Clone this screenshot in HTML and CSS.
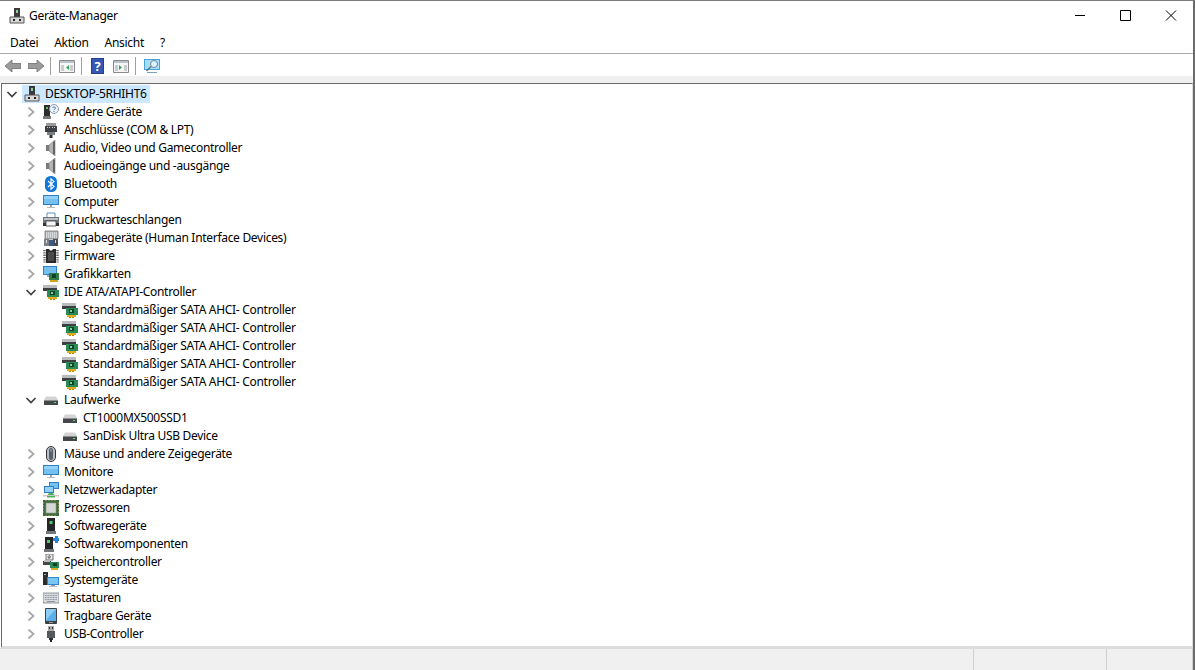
FILE: index.html
```html
<!DOCTYPE html>
<html lang="de">

<head>
    <meta charset="utf-8" />
    <title>Geräte-Manager</title>
    <link rel="stylesheet" href="styles.css">
</head>

<body>
    <!-- Icon sheet, every row below pulls its picture from here -->
    <svg class="icon-sheet" xmlns="http://www.w3.org/2000/svg">
        <symbol id="i-chevron-right" viewBox="0 0 16 16"><path d="M5.500 3.500 10.500 8l-5 4.500" fill="none" stroke="#a6a6a6" stroke-width="1.700"/></symbol>
        <symbol id="i-chevron-down" viewBox="0 0 16 16"><path d="M3.500 6 8 10.500 12.500 6" fill="none" stroke="#404040" stroke-width="1.700"/></symbol>
        <symbol id="i-host" viewBox="0 0 16 16"><path d="M5 0h6v9H5z" fill="#3a3a3a"/><path d="M7 2h2v3H7z" fill="#8fd0a0"/><path d="M1 9h14v6H1z" fill="#d8d8d8" stroke="#555"/><path d="M4 11h2v2H4zM10 11h2v2h-2z" fill="#222"/></symbol>
        <symbol id="i-other" viewBox="0 0 16 16"><path d="M1 1h6v11H1z" fill="#2d2d2d"/><path d="M3 3h2v2H3z" fill="#5fc26b"/><path d="M0 12h8v3H0z" fill="#777"/><circle cx="11" cy="5" r="4.500" fill="#eef5fc" stroke="#8a9bb0"/><path d="M9.500 3.800c.5-1.200 3-1.200 3 .3 0 1-1.500 1-1.500 2M11 7v1" fill="none" stroke="#44709c"/></symbol>
        <symbol id="i-port" viewBox="0 0 16 16"><path d="M3 1h10v3H3z" fill="#9a9a9a"/><path d="M2 4h12v6H2z" fill="#3e4246"/><path d="M4 5h1v1H4zM6 5h1v1H6zM9 5h1v1H9zM11 5h1v1h-1z" fill="#ccc"/><path d="M4 10h8v3H4z" fill="#7b7f84"/><path d="M6.500 13h3v3h-3z" fill="#2e2e2e"/></symbol>
        <symbol id="i-speaker" viewBox="0 0 16 16"><path d="M3 5h3v6H3z" fill="#7a7a7a"/><path d="M6 5l6-5v16l-6-5z" fill="#b4b4b4" stroke="#808080" stroke-width=".6"/><path d="M10 1.500h2v13h-2z" fill="#646464"/></symbol>
        <symbol id="i-bluetooth" viewBox="0 0 16 16"><rect x="2" y="0" width="12" height="16" rx="5.500" fill="#1076d8"/><path d="M5 5l6 5.500-3 2.800V2.700l3 2.800L5 11" fill="none" stroke="#fff" stroke-width="1.100"/></symbol>
        <symbol id="i-monitor" viewBox="0 0 16 16"><path d="M0 1h16v10H0z" fill="#2f80c4"/><path d="M1 2h14v8H1z" fill="#74c0f0"/><path d="M1 2h14v3H1z" fill="#93d2f6"/><path d="M7 11h2v2H7z" fill="#a8a8a8"/><path d="M4 13h8v1H4z" fill="#bbb"/></symbol>
        <symbol id="i-printer" viewBox="0 0 16 16"><path d="M4 1h8v5H4z" fill="#fff" stroke="#4a86b8" stroke-width=".9"/><path d="M0 5h16v6H0z" fill="#6f7479"/><path d="M1 6h14v2H1z" fill="#bcc2c7"/><path d="M3 9h10v5H3z" fill="#f4f4f4" stroke="#444" stroke-width=".8"/><path d="M0 11h3v3H0zM13 11h3v3h-3z" fill="#333"/></symbol>
        <symbol id="i-input" viewBox="0 0 16 16"><path d="M2 1h13v8H2z" fill="#b4b9be" stroke="#666" stroke-width=".7"/><path d="M3 3h11M3 5h11M3 7h11" stroke="#f2f2f2" stroke-dasharray="1 1"/><path d="M1 9h5v7H1z" fill="#7a8087"/><path d="M6 10h4v6H6z" fill="#3c5a85"/><path d="M10 9h5v7h-5z" fill="#4a4e54"/><path d="M3 10h1v3H3zM12 10h1v3h-1z" fill="#ddd"/></symbol>
        <symbol id="i-chip" viewBox="0 0 16 16"><path d="M3 1h3l1 1.500h2L10 1h3v14H3z" fill="#2a2a2a"/><path d="M5 4h6v9H5z" fill="#4a4a4a"/><path d="M1.500 2v12.500M14.500 2v12.500" stroke="#6a6a6a" stroke-width="2.500" stroke-dasharray="1.300 1"/></symbol>
        <symbol id="i-gpu" viewBox="0 0 16 16"><path d="M0 0h14v9H0z" fill="#2f80c4"/><path d="M1 1h12v7H1z" fill="#74c0f0"/><path d="M4 9h3v2H4z" fill="#aaa"/><path d="M6 7h10v7H6z" fill="#2f7d4f"/><path d="M9 8h4v4H9z" fill="#173f28"/><path d="M7 14h8v2H7z" fill="#d9a521"/></symbol>
        <symbol id="i-ide" viewBox="0 0 16 16"><path d="M0 1h14v5H0z" fill="#b9bcbf"/><path d="M0 4h14v3H0z" fill="#3c3f42"/><path d="M4 6h12v7H4z" fill="#2c8a56"/><path d="M7 7h5v4H7z" fill="#12432a"/><path d="M8 8h2v2H8z" fill="#7fd3a0"/><path d="M5 13h9v2H5z" fill="#e0ab1d"/><path d="M7 15h2v1H7zM10 15h2v1h-2z" fill="#b68208"/></symbol>
        <symbol id="i-drive" viewBox="0 0 16 16"><path d="M1 8 3 4.500h10L15 8z" fill="#d4d4d4"/><path d="M1 8h14v5H1z" fill="#44474a"/><path d="M1 8h14v1H1z" fill="#8a8d90"/><path d="M11 10h2v1h-2z" fill="#5fe06f"/></symbol>
        <symbol id="i-mouse" viewBox="0 0 16 16"><rect x="3.500" y=".5" width="9" height="15" rx="4.500" fill="#b9c0c8" stroke="#33363a"/><rect x="6" y="2" width="4" height="12" rx="2" fill="#5c6066"/><path d="M7.500 3h1v3h-1z" fill="#8fa8c4"/></symbol>
        <symbol id="i-network" viewBox="0 0 16 16"><path d="M6 0h10v7H6z" fill="#2f80c4"/><path d="M7 1h8v5H7z" fill="#74c0f0"/><path d="M1 4h10v7H1z" fill="#2f80c4"/><path d="M2 5h8v5H2z" fill="#93d2f6"/><path d="M0 13h16v1.500H0z" fill="#c8c8c8"/><path d="M6 11h4l1.500 2h-7z" fill="#4fb356"/><path d="M4 14h8v1.500H4z" fill="#4fb356"/></symbol>
        <symbol id="i-cpu" viewBox="0 0 16 16"><path d="M0 0h16v16H0z" fill="#2d6a43"/><path d="M1 1h14v14H1z" fill="#426b3f"/><path d="M3 3h10v10H3z" fill="#d5d8d5" stroke="#8d938d" stroke-width=".6"/><path d="M0 3h1M0 6h1M0 9h1M0 12h1M15 3h1M15 6h1M15 9h1M15 12h1M3 0v1M6 0v1M9 0v1M12 0v1M3 15v1M6 15v1M9 15v1M12 15v1" stroke="#d9b13a"/></symbol>
        <symbol id="i-softdev" viewBox="0 0 16 16"><path d="M4 0h8v13H4z" fill="#232527"/><path d="M6.500 3h3v3h-3z" fill="#54c56a"/><path d="M3 13h10v3H3z" fill="#73777b"/></symbol>
        <symbol id="i-softcomp" viewBox="0 0 16 16"><path d="M2 1h8v12H2z" fill="#232527"/><path d="M4 4h3v3H4z" fill="#54c56a"/><path d="M1 13h10v3H1z" fill="#73777b"/><path d="M10 2h2V0h3v2h1v3h-1v2h-3V5h-2z" fill="#2a86d6"/></symbol>
        <symbol id="i-storage" viewBox="0 0 16 16"><path d="M3 0h7v6H3z" fill="#e8e8e8" stroke="#555" stroke-width=".8"/><path d="M5 2.500c1-1.500 3-.5 2 1s-2 .5-1.500-.5" fill="none" stroke="#444"/><path d="M0 7h8v4H0z" fill="#45484b"/><path d="M1 6h6v2H1z" fill="#b9bcbf"/><path d="M7 8h9v6H7z" fill="#2c8a56"/><path d="M10 9h4v3h-4z" fill="#12432a"/><path d="M8 14h7v2H8z" fill="#e0ab1d"/></symbol>
        <symbol id="i-system" viewBox="0 0 16 16"><path d="M0 0h5v13H0z" fill="#2b2d2f"/><path d="M1 2h2v1H1z" fill="#7ed08d"/><path d="M4 5h12v8H4z" fill="#2d86cf"/><path d="M5 6h10v6H5z" fill="#7cc8f3"/><path d="M8 13h4v1H8z" fill="#999"/><path d="M6 14h8v1H6z" fill="#bbb"/></symbol>
        <symbol id="i-keyboard" viewBox="0 0 16 16"><path d="M0 3h16v10H0z" fill="#d7dbdf" stroke="#7c8086" stroke-width=".8"/><path d="M2 5.500h12M2 7.500h12M2 9.500h12" stroke="#8c929a" stroke-dasharray="1 .6"/><path d="M4 11.500h8" stroke="#8c929a"/></symbol>
        <symbol id="i-portable" viewBox="0 0 16 16"><rect x="2" y="0" width="12" height="16" rx="1" fill="#3d4045"/><path d="M3 1h10v12H3z" fill="#5aaeea"/><path d="M3 1h10L3 12z" fill="#8ccdf5"/><path d="M6 14h4v1H6z" fill="#999"/></symbol>
        <symbol id="i-usb" viewBox="0 0 16 16"><path d="M5 0h6v5H5z" fill="#a9a9a9"/><path d="M6 1h1v2H6zM9 1h1v2H9z" fill="#333"/><path d="M4 5h8v7H4z" fill="#55585c"/><path d="M6 12h4v2H6z" fill="#2f3133"/><path d="M7 14h2v2H7z" fill="#1e1e1e"/></symbol>
    </svg>

    <div class="window">
        <header class="title-bar">
            <svg class="ico"><use href="#i-host"/></svg>
            <span class="title-text">Geräte-Manager</span>
            <div class="win-controls">
                <svg class="win-btn" viewBox="0 0 12 12"><path d="M0 5.500h10" stroke="#000" fill="none"/></svg>
                <svg class="win-btn" viewBox="0 0 12 12"><path d="M.5.500h10v10H.5z" stroke="#000" fill="none"/></svg>
                <svg class="win-btn" viewBox="0 0 12 12"><path d="M1 .5l10 10M11 .5 1 10.500" stroke="#000" fill="none"/></svg>
            </div>
        </header>

        <nav class="menu-bar">
            <span>Datei</span>
            <span>Aktion</span>
            <span>Ansicht</span>
            <span>?</span>
        </nav>

        <div class="tool-bar">
            <svg class="ico" viewBox="0 0 16 16"><path d="M0 8l7-6v3.500h9v5H7V14z" fill="#9b9b9b" stroke="#6e6e6e" stroke-width=".8"/></svg>
            <svg class="ico" viewBox="0 0 16 16"><path d="M16 8 9 2v3.500H0v5h9V14z" fill="#9b9b9b" stroke="#6e6e6e" stroke-width=".8"/></svg>
            <i class="tool-sep"></i>
            <svg class="ico" viewBox="0 0 16 16"><path d="M.5 2.500h15v12H.5z" fill="#f6f6f6" stroke="#8a8a8a"/><path d="M1 3h14v2H1z" fill="#b8c3cc"/><path d="M2 7h3v6H2zM11 7h3v6h-3z" fill="#c9ccd0"/><path d="M10 7v5L7 9.500z" fill="#3aa655"/></svg>
            <i class="tool-sep"></i>
            <span class="help-btn">?</span>
            <svg class="ico" viewBox="0 0 16 16"><path d="M.5 2.500h15v12H.5z" fill="#f6f6f6" stroke="#8a8a8a"/><path d="M1 3h14v2H1z" fill="#b8c3cc"/><path d="M2 7h3v6H2zM11 7h3v6h-3z" fill="#c9ccd0"/><path d="M6 7v5l3-2.500z" fill="#3aa655"/></svg>
            <i class="tool-sep"></i>
            <svg class="ico" viewBox="0 0 16 16"><path d="M0 1h16v11H0z" fill="#4aa3dc"/><path d="M1 2h14v9H1z" fill="#a5def8"/><path d="M3 14h10v1H3z" fill="#7a9fb8"/><circle cx="10" cy="6" r="3.500" fill="#dff3fc" stroke="#6f8796"/><path d="M7 8.500 2.500 13" stroke="#5f6f78" stroke-width="1.500"/></svg>
        </div>

        <div class="tool-strip"></div>

        <main class="tree">
            <div class="row lvl-0"><svg class="chev"><use href="#i-chevron-down"/></svg><span class="node node-sel"><svg class="ico"><use href="#i-host"/></svg>DESKTOP-5RHIHT6</span></div>
            <div class="row lvl-1"><svg class="chev"><use href="#i-chevron-right"/></svg><span class="node"><svg class="ico"><use href="#i-other"/></svg>Andere Geräte</span></div>
            <div class="row lvl-1"><svg class="chev"><use href="#i-chevron-right"/></svg><span class="node"><svg class="ico"><use href="#i-port"/></svg>Anschlüsse (COM &amp; LPT)</span></div>
            <div class="row lvl-1"><svg class="chev"><use href="#i-chevron-right"/></svg><span class="node"><svg class="ico"><use href="#i-speaker"/></svg>Audio, Video und Gamecontroller</span></div>
            <div class="row lvl-1"><svg class="chev"><use href="#i-chevron-right"/></svg><span class="node"><svg class="ico"><use href="#i-speaker"/></svg>Audioeingänge und -ausgänge</span></div>
            <div class="row lvl-1"><svg class="chev"><use href="#i-chevron-right"/></svg><span class="node"><svg class="ico"><use href="#i-bluetooth"/></svg>Bluetooth</span></div>
            <div class="row lvl-1"><svg class="chev"><use href="#i-chevron-right"/></svg><span class="node"><svg class="ico"><use href="#i-monitor"/></svg>Computer</span></div>
            <div class="row lvl-1"><svg class="chev"><use href="#i-chevron-right"/></svg><span class="node"><svg class="ico"><use href="#i-printer"/></svg>Druckwarteschlangen</span></div>
            <div class="row lvl-1"><svg class="chev"><use href="#i-chevron-right"/></svg><span class="node"><svg class="ico"><use href="#i-input"/></svg>Eingabegeräte (Human Interface Devices)</span></div>
            <div class="row lvl-1"><svg class="chev"><use href="#i-chevron-right"/></svg><span class="node"><svg class="ico"><use href="#i-chip"/></svg>Firmware</span></div>
            <div class="row lvl-1"><svg class="chev"><use href="#i-chevron-right"/></svg><span class="node"><svg class="ico"><use href="#i-gpu"/></svg>Grafikkarten</span></div>
            <div class="row lvl-1"><svg class="chev"><use href="#i-chevron-down"/></svg><span class="node"><svg class="ico"><use href="#i-ide"/></svg>IDE ATA/ATAPI-Controller</span></div>
            <div class="row lvl-2"><span class="node"><svg class="ico"><use href="#i-ide"/></svg>Standardmäßiger SATA AHCI- Controller</span></div>
            <div class="row lvl-2"><span class="node"><svg class="ico"><use href="#i-ide"/></svg>Standardmäßiger SATA AHCI- Controller</span></div>
            <div class="row lvl-2"><span class="node"><svg class="ico"><use href="#i-ide"/></svg>Standardmäßiger SATA AHCI- Controller</span></div>
            <div class="row lvl-2"><span class="node"><svg class="ico"><use href="#i-ide"/></svg>Standardmäßiger SATA AHCI- Controller</span></div>
            <div class="row lvl-2"><span class="node"><svg class="ico"><use href="#i-ide"/></svg>Standardmäßiger SATA AHCI- Controller</span></div>
            <div class="row lvl-1"><svg class="chev"><use href="#i-chevron-down"/></svg><span class="node"><svg class="ico"><use href="#i-drive"/></svg>Laufwerke</span></div>
            <div class="row lvl-2"><span class="node"><svg class="ico"><use href="#i-drive"/></svg>CT1000MX500SSD1</span></div>
            <div class="row lvl-2"><span class="node"><svg class="ico"><use href="#i-drive"/></svg>SanDisk Ultra USB Device</span></div>
            <div class="row lvl-1"><svg class="chev"><use href="#i-chevron-right"/></svg><span class="node"><svg class="ico"><use href="#i-mouse"/></svg>Mäuse und andere Zeigegeräte</span></div>
            <div class="row lvl-1"><svg class="chev"><use href="#i-chevron-right"/></svg><span class="node"><svg class="ico"><use href="#i-monitor"/></svg>Monitore</span></div>
            <div class="row lvl-1"><svg class="chev"><use href="#i-chevron-right"/></svg><span class="node"><svg class="ico"><use href="#i-network"/></svg>Netzwerkadapter</span></div>
            <div class="row lvl-1"><svg class="chev"><use href="#i-chevron-right"/></svg><span class="node"><svg class="ico"><use href="#i-cpu"/></svg>Prozessoren</span></div>
            <div class="row lvl-1"><svg class="chev"><use href="#i-chevron-right"/></svg><span class="node"><svg class="ico"><use href="#i-softdev"/></svg>Softwaregeräte</span></div>
            <div class="row lvl-1"><svg class="chev"><use href="#i-chevron-right"/></svg><span class="node"><svg class="ico"><use href="#i-softcomp"/></svg>Softwarekomponenten</span></div>
            <div class="row lvl-1"><svg class="chev"><use href="#i-chevron-right"/></svg><span class="node"><svg class="ico"><use href="#i-storage"/></svg>Speichercontroller</span></div>
            <div class="row lvl-1"><svg class="chev"><use href="#i-chevron-right"/></svg><span class="node"><svg class="ico"><use href="#i-system"/></svg>Systemgeräte</span></div>
            <div class="row lvl-1"><svg class="chev"><use href="#i-chevron-right"/></svg><span class="node"><svg class="ico"><use href="#i-keyboard"/></svg>Tastaturen</span></div>
            <div class="row lvl-1"><svg class="chev"><use href="#i-chevron-right"/></svg><span class="node"><svg class="ico"><use href="#i-portable"/></svg>Tragbare Geräte</span></div>
            <div class="row lvl-1"><svg class="chev"><use href="#i-chevron-right"/></svg><span class="node"><svg class="ico"><use href="#i-usb"/></svg>USB-Controller</span></div>
        </main>

        <footer class="status-bar">
            <div class="status-cell"></div>
            <div class="status-cell"></div>
            <div class="status-cell"></div>
        </footer>
    </div>
</body>

</html>
```

FILE: styles.css
```css
* {
    box-sizing: border-box;
}

html,
body {
    margin: 0;
    height: 100%;
    overflow: hidden;
    background-color: #ffffff;
}

body {
    font-family: "Noto Sans", "Open Sans", sans-serif;
    font-size: 12px;
    letter-spacing: -0.3px;
    color: #000000;
}

.icon-sheet {
    display: none;
}

.window {
    display: flex;
    flex-direction: column;
    height: 670px;
    border-top: 1px solid #7a7a7a;
    border-right: 2px solid #6b6b6b;
}

.ico {
    display: block;
    flex: none;
    width: 16px;
    height: 16px;
}

/* Title bar */
.title-bar {
    display: flex;
    align-items: center;
    height: 30px;
    padding-left: 9px;
    gap: 4px;
}

.title-text {
    line-height: 16px;
}

.win-controls {
    display: flex;
    margin-left: auto;
    margin-right: 16px;
    gap: 33px;
}

.win-btn {
    width: 12px;
    height: 12px;
}

/* Menu */
.menu-bar {
    display: flex;
    align-items: center;
    height: 23px;
    padding-left: 10px;
    gap: 16px;
    border-bottom: 1px solid #a9a9b4;
}

/* Toolbar */
.tool-bar {
    display: flex;
    align-items: center;
    height: 22px;
    padding: 2px 0 0 5px;
    gap: 7px;
}

.tool-sep {
    width: 1px;
    height: 18px;
    margin: 0 1px 0 -1px;
    background-color: #a0a0a0;
}

.help-btn {
    flex: none;
    width: 13px;
    height: 16px;
    margin: 0 2px 0 1px;
    background-color: #3557b4;
    border: 1px solid #27408c;
    font-size: 13px;
    font-weight: bold;
    line-height: 14px;
    text-align: center;
    color: #ffffff;
}

.tool-strip {
    height: 7px;
    background-color: #f0f0f0;
}

/* Device tree */
.tree {
    flex: 1;
    padding-top: 1px;
    margin-left: 1px;
    border-top: 1px solid #696969;
    border-left: 1px solid #696969;
    border-right: 1px solid #dcdcdc;
    border-bottom: 2px solid #dcdcdc;
}

.row {
    display: flex;
    align-items: center;
    height: 18px;
}

.lvl-0 {
    padding-left: 2px;
}

.lvl-1 {
    padding-left: 21px;
}

.lvl-2 {
    padding-left: 58px;
}

.chev {
    flex: none;
    width: 16px;
    height: 16px;
    margin-right: 2px;
}

.node {
    display: flex;
    align-items: center;
    height: 18px;
    padding: 0 3px 2px 2px;
    gap: 5px;
    white-space: nowrap;
}

.node .ico {
    align-self: flex-start;
    margin-top: 1px;
}

.node-sel {
    background-color: #cce8ff;
}

/* Status bar */
.status-bar {
    display: grid;
    grid-template-columns: 974px 133px 86px;
    height: 22px;
    background-color: #f0f0f0;
    border-top: 1px solid #dcdcdc;
}

.status-cell {
    border-right: 1px solid #d0d0d0;
}
```
